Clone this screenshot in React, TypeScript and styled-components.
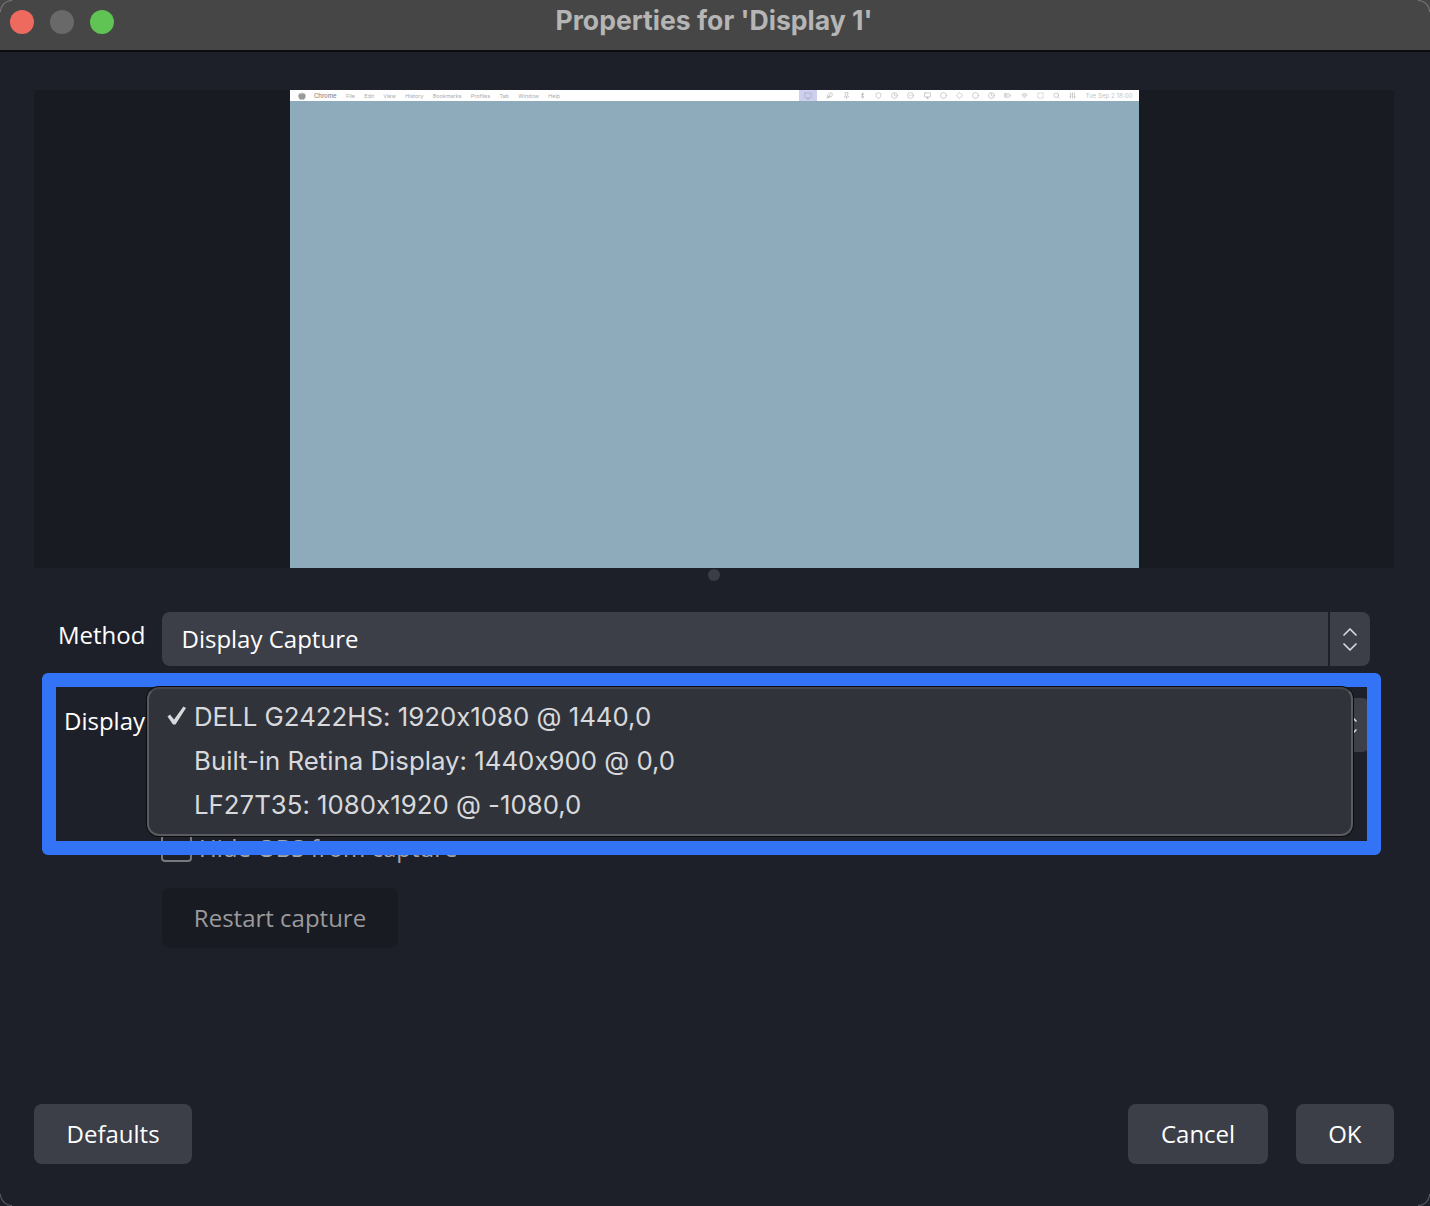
import React from 'react';
import styled, { createGlobalStyle } from 'styled-components';
import { Apple, ChevronDown, ChevronUp, Feather, Search, Wifi, Clock, Circle, CircleCheck, Shield, Monitor, Bluetooth, Diamond, BatteryMedium, SquareDashed, Sliders, Pin } from 'lucide-react';

const GlobalStyle = createGlobalStyle`
  html, body {
    margin: 0;
    padding: 0;
    background: #1e2029;
  }
  * {
    box-sizing: border-box;
  }
`;

const MENU_ITEMS = ['File', 'Edit', 'View', 'History', 'Bookmarks', 'Profiles', 'Tab', 'Window', 'Help'];
const DISPLAYS = ['DELL G2422HS: 1920x1080 @ 1440,0', 'Built-in Retina Display: 1440x900 @ 0,0', 'LF27T35: 1080x1920 @ -1080,0'];
const TRAY_ICONS = [Feather, Pin, Bluetooth, Shield, Clock, CircleCheck, Monitor, Circle, Diamond, Circle, Clock, BatteryMedium, Wifi, SquareDashed, Search, Sliders];

const ComboArrowIcons = () => (
  <ComboArrows>
    <ChevronUp size={24} strokeWidth={1.7} color="#d8d8dc" />
    <ChevronDown size={24} strokeWidth={1.7} color="#d8d8dc" />
  </ComboArrows>
);

export default function App() {
  return (
    <Window>
      <GlobalStyle />
      <TitleBar>
        <Lights>
          <Light color="#ee6a5f" />
          <Light color="#696969" />
          <Light color="#5fc454" />
        </Lights>
        <Title>Properties for 'Display 1'</Title>
      </TitleBar>
      <Body>
        <Preview>
          <Screen>
            <MenuBar>
              <MenuLeft>
                <Apple size={8} color="#999" fill="#999" />
                <MenuApp>Chrome</MenuApp>
                {MENU_ITEMS.map((item) => (
                  <MenuItem key={item}>{item}</MenuItem>
                ))}
              </MenuLeft>
              <MenuRight>
                <ActiveTray>
                  <Monitor size={8} color="#aab" />
                </ActiveTray>
                {TRAY_ICONS.map((Icon, index) => (
                  <Icon key={index} size={7} color="#aaa" />
                ))}
                <MenuClock>Tue Sep 2 18:00</MenuClock>
              </MenuRight>
            </MenuBar>
          </Screen>
        </Preview>
        <SplitRow>
          <SplitHandle />
        </SplitRow>
        <Form>
          <ComboRow>
            <MethodLabel>Method</MethodLabel>
            <Combo>
              <ComboValue>Display Capture</ComboValue>
              <ComboArrowIcons />
            </Combo>
          </ComboRow>
          <DisplayRow>
            <DisplayLabel>Display</DisplayLabel>
            <Combo>
              <ComboValue />
              <ComboArrowIcons />
            </Combo>
          </DisplayRow>
          <HideRow>
            <CheckBox />
            <HideText>Hide OBS from capture</HideText>
          </HideRow>
          <RestartButton>Restart capture</RestartButton>
          <Highlight />
          <PopupMenu>
            {DISPLAYS.map((display, index) => (
              <PopupItem key={display}>
                <PopupCheck>
                  {index === 0 && (
                    <svg width="20" height="20" viewBox="0 0 20 20">
                      <path d="M0.5 10.5 L3 8.5 L7 13.5 L16.5 0.5 L19 2 L8.5 18.5 L6 18.5 Z" fill="#d8d9dc" />
                    </svg>
                  )}
                </PopupCheck>
                {display}
              </PopupItem>
            ))}
          </PopupMenu>
        </Form>
        <Footer>
          <FooterButton>Defaults</FooterButton>
          <FooterRight>
            <FooterButton>Cancel</FooterButton>
            <FooterButton>OK</FooterButton>
          </FooterRight>
        </Footer>
      </Body>
      <Corner top left />
      <Corner top />
      <Corner left />
      <Corner />
    </Window>
  );
}

const Window = styled.div`
  position: relative;
  width: 1430px;
  height: 1206px;
  display: flex;
  flex-direction: column;
  overflow: hidden;
  background: #1e2029;
  font-family: 'Open Sans', sans-serif;
  color: #fff;
`;

const Corner = styled.div<{ top?: boolean; left?: boolean }>`
  position: absolute;
  width: 12px;
  height: 12px;
  ${({ top }) => (top ? 'top: 0;' : 'bottom: 0;')}
  ${({ left }) => (left ? 'left: 0;' : 'right: 0;')}
  border-style: solid;
  border-color: rgba(255, 255, 255, 0.28);
  border-width: ${({ top }) => (top ? '1px' : '0')} ${({ left }) => (left ? '0' : '1px')} ${({ top }) => (top ? '0' : '1px')} ${({ left }) => (left ? '1px' : '0')};
  border-${({ top }) => (top ? 'top' : 'bottom')}-${({ left }) => (left ? 'left' : 'right')}-radius: 12px;
`;

const TitleBar = styled.div`
  position: relative;
  flex: none;
  height: 52px;
  display: flex;
  align-items: center;
  justify-content: center;
  padding: 0 2px 10px 0;
  background: #464646;
  border-bottom: 2px solid #0c0c0e;
`;

const Lights = styled.div`
  position: absolute;
  left: 10px;
  top: 10px;
  display: flex;
  gap: 16px;
`;

const Light = styled.div<{ color: string }>`
  width: 24px;
  height: 24px;
  border-radius: 50%;
  background: ${({ color }) => color};
`;

const Title = styled.div`
  font-family: Inter, sans-serif;
  font-size: 26.6px;
  font-weight: 700;
  color: #b5b5b5;
`;

const Body = styled.div`
  flex: 1;
  display: flex;
  flex-direction: column;
  padding: 38px 36px 42px 34px;
`;

const Preview = styled.div`
  flex: none;
  height: 478px;
  display: flex;
  justify-content: center;
  background: #191b22;
`;

const Screen = styled.div`
  width: 849px;
  height: 100%;
  background: #8eabbc;
`;

const MenuBar = styled.div`
  height: 11px;
  display: flex;
  align-items: center;
  justify-content: space-between;
  padding: 0 6px 0 8px;
  background: #fff;
`;

const MenuLeft = styled.div`
  display: flex;
  align-items: center;
  gap: 9.4px;
`;

const MenuRight = styled.div`
  display: flex;
  align-items: center;
  gap: 9.2px;
`;

const MenuApp = styled.span`
  margin-left: -1px;
  font-family: Inter, sans-serif;
  font-size: 6px;
  font-weight: 500;
  color: #888;
`;

const MenuItem = styled.span`
  font-family: Inter, sans-serif;
  font-size: 5.4px;
  color: #aaa;
`;

const ActiveTray = styled.div`
  width: 18px;
  height: 11px;
  display: flex;
  align-items: center;
  justify-content: center;
  background: #ccd0ee;
`;

const MenuClock = styled.span`
  font-family: Inter, sans-serif;
  font-size: 6.2px;
  color: #c4c4c4;
`;

const SplitRow = styled.div`
  flex: none;
  height: 14px;
  display: flex;
  align-items: center;
  justify-content: center;
`;

const SplitHandle = styled.div`
  width: 12px;
  height: 12px;
  border-radius: 50%;
  background: #3a3d47;
`;

const Form = styled.div`
  position: relative;
  flex: 1;
  display: flex;
  flex-direction: column;
  padding-top: 30px;
`;

const ComboRow = styled.div`
  display: flex;
  gap: 17px;
  padding: 0 24px;
`;

const MethodLabel = styled.div`
  font-size: 24px;
  line-height: 45px;
`;

const Combo = styled.div`
  flex: 1;
  height: 54px;
  display: flex;
  align-items: center;
  justify-content: space-between;
  background: #3c3e48;
  border-radius: 8px;
`;

const ComboValue = styled.div`
  padding-left: 19px;
  font-size: 24px;
  line-height: 54px;
`;

const ComboArrows = styled.div`
  width: 42px;
  height: 100%;
  display: flex;
  flex-direction: column;
  align-items: center;
  justify-content: center;
  border-left: 2px solid #1e2029;
  & svg {
    margin: -4.5px 0;
  }
`;

const DisplayRow = styled(ComboRow)`
  margin-top: 32px;
  padding-left: 30px;
`;

const DisplayLabel = styled(MethodLabel)`
  width: 81px;
`;

const HideRow = styled.div`
  display: flex;
  align-items: center;
  gap: 7px;
  height: 32px;
  margin-top: 80px;
  padding-left: 127px;
`;

const CheckBox = styled.div`
  width: 31px;
  height: 28px;
  border: 2px solid #77797f;
  border-radius: 4px;
`;

const HideText = styled.div`
  margin-top: -2px;
  font-size: 24px;
  color: #a6a6aa;
`;

const RestartButton = styled.div`
  width: 236px;
  height: 60px;
  display: flex;
  align-items: center;
  justify-content: center;
  margin: 24px 0 0 128px;
  padding-bottom: 2px;
  border-radius: 8px;
  background: #191b22;
  color: #9a9a9d;
  font-size: 24px;
`;

const Highlight = styled.div`
  position: absolute;
  left: 8px;
  top: 91px;
  width: 1339px;
  height: 182px;
  border: 14px solid #3374f6;
  border-radius: 6px;
  pointer-events: none;
`;

const PopupMenu = styled.div`
  position: absolute;
  left: 113px;
  top: 105px;
  width: 1206px;
  height: 149px;
  padding: 5px 0;
  background: #31333a;
  border: 2px solid #5a5b60;
  border-top-color: #44464c;
  border-radius: 12px;
  box-shadow: 0 0 0 1px #0c0c0e;
  font-family: Inter, sans-serif;
  font-feature-settings: 'calt' 0;
`;

const PopupItem = styled.div`
  height: 44px;
  display: flex;
  align-items: center;
  padding-left: 18px;
  font-size: 25.8px;
  color: #d8d9dc;
`;

const PopupCheck = styled.span`
  width: 27px;
  display: flex;
  align-items: center;
`;

const Footer = styled.div`
  flex: none;
  display: flex;
  justify-content: space-between;
`;

const FooterRight = styled.div`
  display: flex;
  gap: 28px;
`;

const FooterButton = styled.div`
  height: 60px;
  display: flex;
  align-items: center;
  padding: 0 32.5px 2px;
  border-radius: 8px;
  background: #3c3e48;
  font-size: 24px;
`;
